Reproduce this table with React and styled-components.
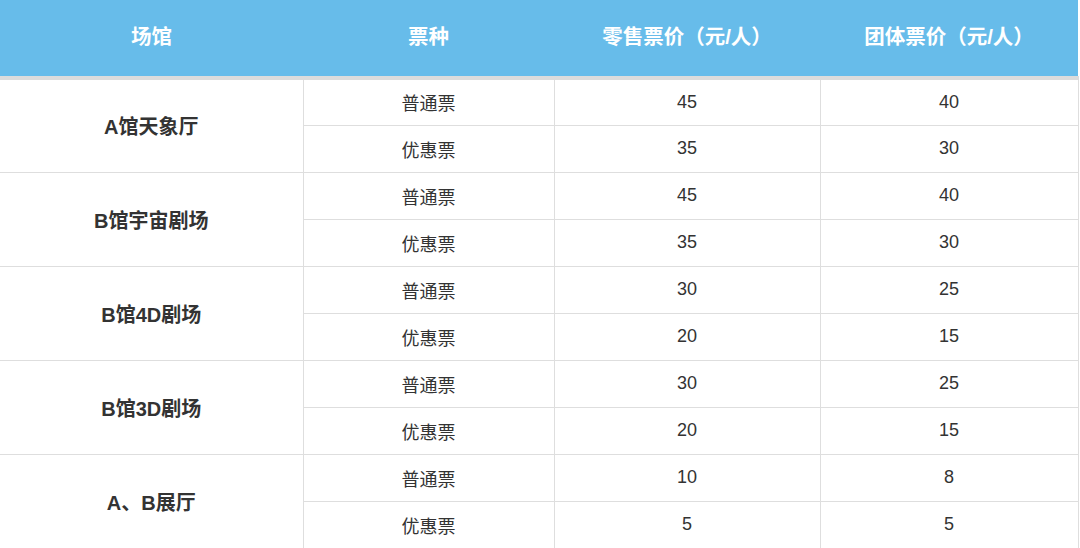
import React from "react";
import styled, { createGlobalStyle } from "styled-components";

const GlobalStyle = createGlobalStyle`
  html, body {
    margin: 0;
    padding: 0;
    background: #ffffff;
  }
  body {
    font-family: "Liberation Sans", "Noto Sans CJK SC", sans-serif;
  }
`;

const venues = [
  { name: "A馆天象厅", rows: [["普通票", "45", "40"], ["优惠票", "35", "30"]] },
  { name: "B馆宇宙剧场", rows: [["普通票", "45", "40"], ["优惠票", "35", "30"]] },
  { name: "B馆4D剧场", rows: [["普通票", "30", "25"], ["优惠票", "20", "15"]] },
  { name: "B馆3D剧场", rows: [["普通票", "30", "25"], ["优惠票", "20", "15"]] },
  { name: "A、B展厅", rows: [["普通票", "10", "8"], ["优惠票", "5", "5"]] },
];

const Table = styled.table`
  width: 1078px;
  border-collapse: collapse;
  table-layout: fixed;
  color: #333333;
`;

const HeadRow = styled.tr`
  height: 78px;
  background: #67bcea;
  border-bottom: 4px solid #dcdcdc;
`;

const HeadCell = styled.th`
  color: #ffffff;
  font-size: 20.5px;
  font-weight: 700;
  text-align: center;
  vertical-align: middle;
  padding: 0;
  padding-bottom: 6px;
`;

const Row = styled.tr`
  height: 47px;
`;

const VenueCell = styled.td`
  font-size: 20px;
  font-weight: 700;
  text-align: center;
  vertical-align: middle;
  border-bottom: 1px solid #dedede;
  border-right: 1px solid #dedede;
  padding: 0;
`;

const Cell = styled.td`
  font-size: 18px;
  font-weight: 400;
  text-align: center;
  vertical-align: middle;
  border: 1px solid #dedede;
  border-top: none;
  padding: 0;
`;

export default function App() {
  return (
    <>
      <GlobalStyle />
      <Table>
        <colgroup>
          <col style={{ width: 303 }} />
          <col style={{ width: 251 }} />
          <col style={{ width: 266 }} />
          <col style={{ width: 258 }} />
        </colgroup>
        <thead>
          <HeadRow>
            <HeadCell>场馆</HeadCell>
            <HeadCell>票种</HeadCell>
            <HeadCell>零售票价（元/人）</HeadCell>
            <HeadCell>团体票价（元/人）</HeadCell>
          </HeadRow>
        </thead>
        <tbody>
          {venues.map((v) =>
            v.rows.map((r, i) => (
              <Row key={v.name + i}>
                {i === 0 && <VenueCell rowSpan={2}>{v.name}</VenueCell>}
                <Cell>{r[0]}</Cell>
                <Cell>{r[1]}</Cell>
                <Cell>{r[2]}</Cell>
              </Row>
            ))
          )}
        </tbody>
      </Table>
    </>
  );
}
